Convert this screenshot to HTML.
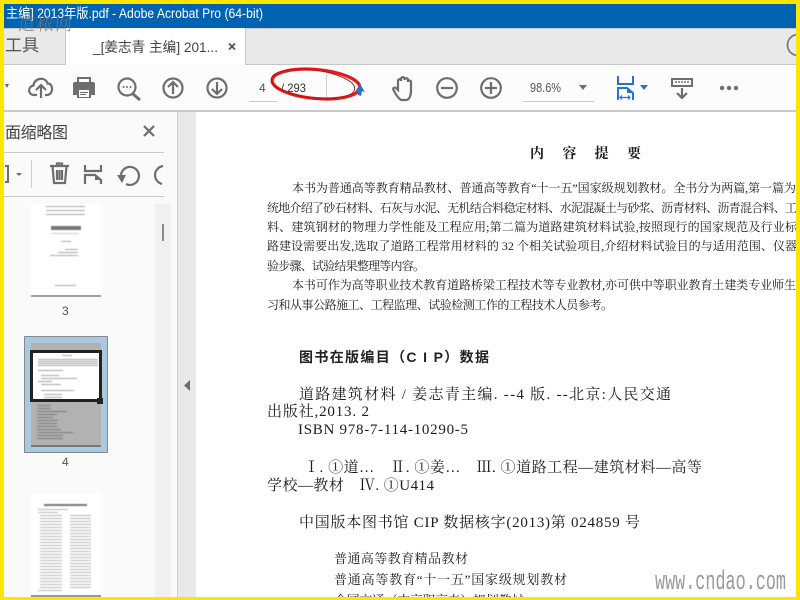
<!DOCTYPE html>
<html><head><meta charset="utf-8">
<style>
html,body{margin:0;padding:0;background:#fff}
#r{position:relative;width:800px;height:600px;overflow:hidden;background:#fff}
svg{position:absolute;left:0;top:0}
.ui{font-family:"Liberation Sans","Noto Sans CJK SC",sans-serif}
.d{font-family:"Liberation Serif","Noto Serif CJK SC",serif;fill:#1c1c1c}
.s{font-family:"Liberation Sans","Noto Sans CJK SC",sans-serif;fill:#222}
.ic{fill:none;stroke:#6e6e6e;stroke-width:2.2}
</style></head><body><div id="r">
<svg width="800" height="600" viewBox="0 0 800 600">
<defs><filter id="b"><feGaussianBlur stdDeviation="0.3"/></filter>
<filter id="b2"><feGaussianBlur stdDeviation="0.6"/></filter></defs>
<!-- backgrounds -->
<rect x="0" y="0" width="800" height="600" fill="#fff"/>
<rect x="0" y="4" width="800" height="24" fill="#0063b1"/>
<rect x="0" y="28" width="800" height="37" fill="#e9e9e9"/>
<rect x="0" y="28" width="800" height="1" fill="#c8c8c8"/>
<rect x="0" y="64" width="800" height="1" fill="#c6c6c6"/>
<rect x="65" y="28" width="181" height="37" fill="#fff"/>
<rect x="65" y="28" width="1" height="37" fill="#c8c8c8"/>
<rect x="245" y="28" width="1" height="37" fill="#c8c8c8"/>
<rect x="0" y="65" width="800" height="45" fill="#fcfcfc"/>
<rect x="0" y="110" width="800" height="2" fill="#c9c9c9"/>
<rect x="0" y="112" width="177" height="488" fill="#fafafa"/>
<rect x="155" y="204" width="16" height="396" fill="#f0f0f0"/>
<rect x="177" y="112" width="19" height="488" fill="#e9e9e9"/>
<rect x="177" y="112" width="1" height="488" fill="#d0d0d0"/>
<rect x="4" y="152" width="160" height="1" fill="#c8c8c8"/>
<rect x="4" y="196" width="160" height="1" fill="#c8c8c8"/>
<rect x="31" y="160" width="1" height="28" fill="#cfcfcf"/>
<rect x="162" y="224" width="2" height="17" fill="#8a8a8a"/>
<path d="M190 380v11l-6-5.500z" fill="#6e6e6e"/>

<!-- title -->
<text class="ui" x="6" y="18" font-size="13.6" fill="#fff" textLength="257" lengthAdjust="spacingAndGlyphs">主编] 2013年版.pdf - Adobe Acrobat Pro (64-bit)</text>
<text class="d" x="18" y="30" font-size="17" style="fill:#777" opacity=".75" textLength="54">道 秾 网</text>
<!-- tabs -->
<text class="ui" x="5" y="51" font-size="17" fill="#555">工具</text>
<text class="ui" x="93" y="52" font-size="14" fill="#444" textLength="125" lengthAdjust="spacingAndGlyphs">_[姜志青 主编] 201...</text>
<path d="M229 43.500l6 6M235 43.500l-6 6" stroke="#555" stroke-width="1.800" fill="none"/>
<circle cx="798" cy="45" r="10.500" fill="none" stroke="#777" stroke-width="1.700"/>

<!-- toolbar icons -->
<path d="M5 84h4l-2 4z" fill="#666"/>
<path class="ic" d="M37 95h-2.500c-7 0-7-8.500-1-9.500 .5-7.500 12-9.500 14-2 6-.5 6.500 11.500-1 11.500H45"/>
<path class="ic" d="M41 98V85M36 90l5-5 5 5"/>
<path d="M77 77h14v5h2a2 2 0 0 1 2 2v11h-4v3H77v-3h-4V84a2 2 0 0 1 2-2h2z" fill="#6e6e6e"/>
<rect x="79" y="90" width="10" height="7" fill="#fff"/><rect x="80" y="92" width="8" height="1" fill="#6e6e6e"/><rect x="80" y="94" width="6" height="1" fill="#6e6e6e"/>
<rect x="79" y="79" width="10" height="3" fill="#fff"/>
<circle class="ic" cx="127" cy="87" r="8.500"/><path d="M133 94l7 6" stroke="#6e6e6e" stroke-width="2.800" fill="none"/>
<circle cx="123.500" cy="87" r="1" fill="#6e6e6e"/><circle cx="127" cy="87" r="1" fill="#6e6e6e"/><circle cx="130.500" cy="87" r="1" fill="#6e6e6e"/>
<circle class="ic" cx="173" cy="88" r="9.500"/><path class="ic" d="M173 94V82M168 87l5-5 5 5"/>
<circle class="ic" cx="217" cy="88" r="9.500"/><path class="ic" d="M217 82v12M212 89l5 5 5-5"/>
<text class="ui" x="259" y="92" font-size="12" fill="#555">4</text>
<rect x="249" y="101" width="28" height="1" fill="#c8c8c8"/>
<text class="ui" x="281" y="92" font-size="12" fill="#333" textLength="25" lengthAdjust="spacingAndGlyphs">/ 293</text>
<rect x="326" y="74" width="1" height="27" fill="#d2d2d2"/>
<ellipse cx="316" cy="84" rx="44" ry="14.500" fill="none" stroke="#e21b1b" stroke-width="3.200" transform="rotate(5 316 84)"/>
<ellipse cx="313" cy="84" rx="42" ry="14" fill="none" stroke="#b01818" stroke-width="1" transform="rotate(7 313 84)"/>
<path d="M360 84l5 8-3-1-1 5-3-1 0-4-3 1z" fill="#2f6fbd"/>
<path class="ic" d="M401 100c-3-2-6-7-7.500-10-1-2 1-3 2.500-2l2 2V81c0-2.500 3-2.500 3 0v-2c0-2.500 3.500-2.500 3.500 0v1c0-2.500 3.500-2.500 3.500 0v2c0-2 3-2 3 0v9c0 5-2 9-5 9z" stroke-width="1.700"/>
<circle class="ic" cx="447" cy="88" r="9.800"/><path class="ic" d="M441 88h12"/>
<circle class="ic" cx="491" cy="88" r="9.800"/><path class="ic" d="M485 88h12M491 82v12"/>
<text class="ui" x="530" y="92" font-size="13" fill="#555" textLength="31" lengthAdjust="spacingAndGlyphs">98.6%</text>
<path d="M579 85h8l-4 5z" fill="#6e6e6e"/>
<rect x="523" y="101" width="71" height="1" fill="#c8c8c8"/>
<path d="M618 76v8h15v-8" fill="none" stroke="#2673c9" stroke-width="2"/>
<path d="M618 100V88h9l6 5v7" fill="none" stroke="#2673c9" stroke-width="2"/>
<path d="M627 88v5h6z" fill="#2673c9"/>
<path d="M620 97.500h10M622 95.500l-2 2 2 2M628 95.500l2 2-2 2" stroke="#2673c9" stroke-width="1.200" fill="none"/>
<path d="M640 85h8l-4 5z" fill="#2673c9"/>
<rect x="672" y="79" width="20" height="7" fill="none" stroke="#6e6e6e" stroke-width="2"/>
<path d="M675 82h2M678 82h2M681 82h2M684 82h2M687 82h2" stroke="#6e6e6e" stroke-width="1.500"/>
<path class="ic" d="M682 88v10M677 93l5 5 5-5"/>
<circle cx="722" cy="88" r="2.200" fill="#6e6e6e"/><circle cx="729" cy="88" r="2.200" fill="#6e6e6e"/><circle cx="736" cy="88" r="2.200" fill="#6e6e6e"/>

<!-- panel -->
<text class="ui" x="5" y="138" font-size="16" fill="#444" textLength="63">面缩略图</text>
<path d="M144 126l10 10M154 126l-10 10" stroke="#6e6e6e" stroke-width="2.200" fill="none"/>
<path d="M5 166h3v16H5" fill="none" stroke="#6e6e6e" stroke-width="2"/>
<path d="M16 173h6l-3 3z" fill="#6e6e6e"/>
<path class="ic" d="M50 166h19M57 166v-2.500h5v2.500M52.500 166l1.500 17h11l1.500-17M57 170v10M59.500 170v10M62 170v10" stroke-width="1.700"/>
<path class="ic" d="M85 165v6h16v-6M85 184v-9h10l6 5v4" stroke-width="1.900"/>
<path d="M95 175v5h6z" fill="#6e6e6e"/>
<path class="ic" d="M121 177a9 9 0 1 1 5 7" stroke-width="2.300"/><path d="M117 175h9l-4 8z" fill="#6e6e6e"/>
<path class="ic" d="M163 166a9.500 9.500 0 0 0-8 9 9.500 9.500 0 0 0 7 9" stroke-width="2.300"/>

<!-- thumb 3 -->
<rect x="31" y="204" width="70" height="92" fill="#fff"/>
<rect x="31" y="295" width="70" height="2" fill="#a0a0a0"/>
<g filter="url(#b2)" fill="#a8a8a8">
<rect x="46" y="206" width="39" height="1"/><rect x="46" y="210" width="39" height="1"/><rect x="46" y="214" width="39" height="1"/>
<rect x="51" y="226" width="30" height="4" fill="#777"/>
<rect x="52" y="233" width="27" height="1" fill="#ccc"/><rect x="61" y="241" width="10" height="1"/>
<rect x="65" y="249" width="13" height="1"/><rect x="58" y="252" width="20" height="1"/><rect x="50" y="255" width="28" height="1"/>
<rect x="55" y="285" width="21" height="1"/>
</g>
<text class="ui" x="62" y="315" font-size="12" fill="#555">3</text>

<!-- thumb 4 -->
<rect x="24.500" y="336.500" width="83" height="116" fill="#a9c9de" stroke="#333" stroke-width="1" stroke-dasharray="1 1"/>
<rect x="31" y="343" width="70" height="104" fill="#b2b2b2"/>
<rect x="31" y="445" width="70" height="2" fill="#777"/>
<g filter="url(#b2)" fill="#7c7c7c">
<rect x="37" y="405" width="14" height="1"/><rect x="37" y="408" width="14" height="1"/><rect x="37" y="411" width="30" height="1"/><rect x="37" y="414" width="20" height="1"/><rect x="37" y="417" width="16" height="1"/><rect x="37" y="420" width="21" height="1"/><rect x="37" y="423" width="20" height="1"/><rect x="37" y="426" width="20" height="1"/><rect x="37" y="429" width="24" height="1"/><rect x="37" y="432" width="36" height="1"/><rect x="37" y="435" width="26" height="1"/><rect x="37" y="438" width="26" height="1"/>
</g>
<rect x="30" y="350" width="72" height="52" fill="#fff"/>
<rect x="31.500" y="351.500" width="69" height="49" fill="none" stroke="#222" stroke-width="3"/>
<rect x="97" y="398" width="6" height="6" fill="#222"/>
<g filter="url(#b2)" fill="#a5a5a5">
<rect x="62" y="355" width="10" height="1"/><rect x="38" y="359" width="60" height="1"/><rect x="38" y="361" width="60" height="1"/><rect x="38" y="363" width="60" height="1"/><rect x="38" y="365" width="60" height="1"/><rect x="38" y="370" width="25" height="1"/>
<rect x="41" y="375" width="18" height="1"/><rect x="41" y="378" width="36" height="1"/><rect x="38" y="381" width="14" height="1"/><rect x="41" y="384" width="20" height="1"/><rect x="41" y="390" width="33" height="1"/><rect x="44" y="394" width="18" height="1"/><rect x="44" y="397" width="18" height="1"/>
</g>
<text class="ui" x="62" y="466" font-size="12" fill="#555">4</text>

<!-- thumb 5 -->
<rect x="31" y="493" width="70" height="107" fill="#fff"/>
<g filter="url(#b2)" fill="#b8b8b8">
<rect x="44" y="504" width="43" height="2" fill="#777"/>
<path d="M38 509h30v1H38zM38 512h20v1H38zM40 515h22v1H40zM40 518h22v1H40zM40 521h22v1H40zM40 524h22v1H40zM40 527h22v1H40zM40 530h22v1H40zM40 533h22v1H40zM40 536h22v1H40zM40 539h22v1H40zM40 542h22v1H40zM40 545h22v1H40zM40 548h22v1H40zM40 551h22v1H40zM40 554h22v1H40zM40 557h22v1H40zM40 560h22v1H40zM40 563h22v1H40zM40 566h22v1H40zM40 569h22v1H40zM40 572h22v1H40zM40 575h22v1H40zM40 578h22v1H40zM40 581h22v1H40zM40 584h22v1H40zM40 587h22v1H40zM38 590h24v1H38z"/>
<path d="M70 515h21v1H70zM70 518h21v1H70zM70 521h21v1H70zM70 524h21v1H70zM70 527h21v1H70zM70 530h21v1H70zM70 533h21v1H70zM70 536h21v1H70zM70 539h21v1H70zM70 542h21v1H70zM70 545h21v1H70zM70 548h21v1H70zM70 551h21v1H70zM70 554h21v1H70zM70 557h21v1H70zM70 560h21v1H70zM70 563h21v1H70zM70 566h21v1H70zM70 569h21v1H70zM70 572h21v1H70zM70 575h21v1H70zM70 578h21v1H70zM70 581h21v1H70zM70 584h21v1H70zM70 587h21v1H70z"/>
</g>
<rect x="31" y="595" width="70" height="2" fill="#999"/>

<!-- document -->
<g filter="url(#b)">
<text class="d" x="530" y="158" font-size="14" textLength="111" font-weight="700">内 容 提 要</text>
<g font-size="12">
<text class="d" x="292" y="192" textLength="504">本书为普通高等教育精品教材、普通高等教育“十一五”国家级规划教材。全书分为两篇,第一篇为</text>
<text class="d" x="267" y="212" textLength="530">统地介绍了砂石材料、石灰与水泥、无机结合料稳定材料、水泥混凝土与砂浆、沥青材料、沥青混合料、工</text>
<text class="d" x="267" y="231" textLength="530">料、建筑钢材的物理力学性能及工程应用;第二篇为道路建筑材料试验,按照现行的国家规范及行业标</text>
<text class="d" x="267" y="250" textLength="530">路建设需要出发,选取了道路工程常用材料的 32 个相关试验项目,介绍材料试验目的与适用范围、仪器</text>
<text class="d" x="267" y="270" textLength="158">验步骤、试验结果整理等内容。</text>
<text class="d" x="292" y="289" textLength="504">本书可作为高等职业技术教育道路桥梁工程技术等专业教材,亦可供中等职业教育土建类专业师生</text>
<text class="d" x="267" y="309" textLength="346">习和从事公路施工、工程监理、试验检测工作的工程技术人员参考。</text>
</g>
<text class="s" x="299" y="362" font-size="14" font-weight="700" textLength="190">图书在版编目（C I P）数据</text>
<g font-size="15">
<text class="d" x="299" y="399" textLength="372">道路建筑材料 / 姜志青主编. --4 版. --北京:人民交通</text>
<text class="d" x="267" y="416" textLength="102">出版社,2013. 2</text>
<text class="d" x="298" y="434" textLength="170">ISBN 978-7-114-10290-5</text>
<text class="d" x="304" y="472" textLength="398">Ⅰ. ①道…　Ⅱ. ①姜…　Ⅲ. ①道路工程—建筑材料—高等</text>
<text class="d" x="267" y="490" textLength="167">学校—教材　Ⅳ. ①U414</text>
<text class="d" x="299" y="527" textLength="341">中国版本图书馆 CIP 数据核字(2013)第 024859 号</text>
</g>
<g font-size="13">
<text class="d" x="334" y="563" textLength="134">普通高等教育精品教材</text>
<text class="d" x="334" y="584" textLength="233">普通高等教育“十一五”国家级规划教材</text>
<text class="d" x="334" y="605" textLength="190">全国交通（中高职高专）规划教材</text>
</g>
</g>
<text x="655" y="589" font-family="Liberation Mono, monospace" font-size="27" fill="#9a9a9a" textLength="131" lengthAdjust="spacingAndGlyphs">www.cndao.com</text>

<!-- yellow frame -->
<rect x="0" y="0" width="800" height="4" fill="#ffe600"/>
<rect x="0" y="0" width="4" height="600" fill="#ffe600"/>
<rect x="796" y="0" width="4" height="600" fill="#ffe600"/>
<rect x="0" y="597" width="800" height="3" fill="#ffe600"/>
</svg>
</div></body></html>
